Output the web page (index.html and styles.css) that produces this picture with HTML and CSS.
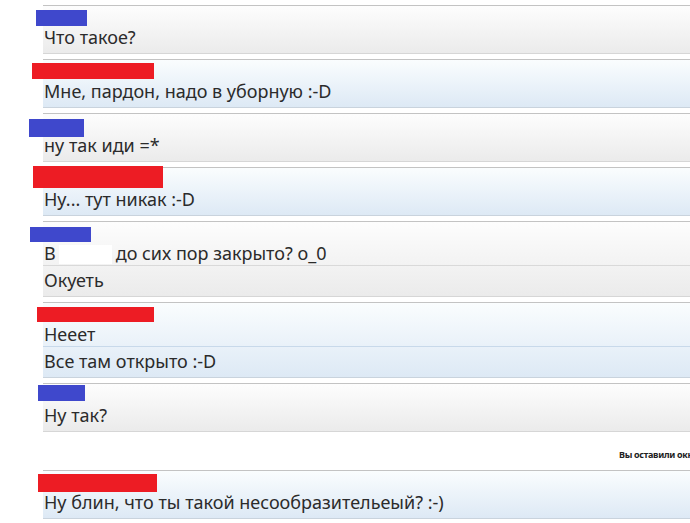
FILE: index.html
```html
<!DOCTYPE html>
<html lang="ru">
<head>
<meta charset="utf-8">
<title>Чат</title>
<link rel="stylesheet" href="styles.css">
</head>
<body>
<div class="chat">
  <div class="msg msg-gray">
    <span class="name name-blue" style="left:-7px;top:4px;width:51px;height:16px"></span>
    <div class="line">Что такое?</div>
  </div>
  <div class="msg msg-blue">
    <span class="name name-red" style="left:-11px;top:3px;width:122px;height:16px"></span>
    <div class="line">Мне, пардон, надо в уборную :-D</div>
  </div>
  <div class="msg msg-gray">
    <span class="name name-blue" style="left:-14px;top:5px;width:55px;height:18px"></span>
    <div class="line">ну так иди =*</div>
  </div>
  <div class="msg msg-blue">
    <span class="name name-red" style="left:-10px;top:-2px;width:130px;height:22px"></span>
    <div class="line">Ну... тут никак :-D</div>
  </div>
  <div class="msg msg-gray">
    <span class="name name-blue" style="left:-13px;top:5px;width:61px;height:15px"></span>
    <div class="line">В<span class="hidden-word"></span>до сих пор закрыто? о_0</div>
    <div class="line">Окуеть</div>
  </div>
  <div class="msg msg-blue">
    <span class="name name-red" style="left:-6px;top:4px;width:117px;height:15px"></span>
    <div class="line">Нееет</div>
    <div class="line">Все там открыто :-D</div>
  </div>
  <div class="msg msg-gray">
    <span class="name name-blue" style="left:-5px;top:1px;width:47px;height:16px"></span>
    <div class="line">Ну так?</div>
  </div>
  <div class="notice">Вы оставили окно чата открытым</div>
  <div class="msg msg-blue">
    <span class="name name-red" style="left:-5px;top:3px;width:119px;height:18px"></span>
    <div class="line">Ну блин, что ты такой несообразительеый? :-)</div>
  </div>
</div>
</body>
</html>
```
FILE: styles.css
```css
html, body {
  margin: 0;
  padding: 0;
  background: #ffffff;
  overflow: hidden;
}

.chat {
  display: flex;
  flex-direction: column;
  gap: 5px;
  padding: 5px 0 0 43px;
  width: 700px;
  font-family: "Noto Sans", "Open Sans", sans-serif;
  font-size: 18px;
  color: #2b2b2b;
}

.msg {
  position: relative;
  display: flex;
  flex-direction: column;
  padding-top: 17px;
  padding-bottom: 4px;
  border-top: 1px solid #c3c3c3;
  border-bottom: 1px solid #d6d6d6;
}

.msg-gray {
  background: linear-gradient(to bottom, #fdfdfd, #ebebeb);
}

.msg-blue {
  background: linear-gradient(to bottom, #fafdfe, #dde9f5);
  border-bottom-color: #c9d3dd;
}

.line {
  height: 24px;
  line-height: 24px;
  padding-top: 2px;
  padding-left: 1px;
  white-space: nowrap;
}

.line + .line {
  border-top: 1px solid #d9d9d9;
}

.msg-blue .line + .line {
  border-top-color: #c8d9ea;
}

.name {
  position: absolute;
}

.name-blue {
  background: #3f48cc;
}

.name-red {
  background: #ed1c24;
}

.hidden-word {
  display: inline-block;
  width: 53px;
  height: 19px;
  margin: 0 4px 0 3px;
  vertical-align: -4px;
  background: #ffffff;
}

.notice {
  height: 28px;
  line-height: 28px;
  padding-top: 0;
  padding-left: 576px;
  white-space: nowrap;
  font-family: "Noto Sans", "Open Sans", sans-serif;
  font-size: 9px;
  font-weight: bold;
  letter-spacing: -0.3px;
  color: #222222;
  box-sizing: border-box;
  padding-top: 4px;
}
```
